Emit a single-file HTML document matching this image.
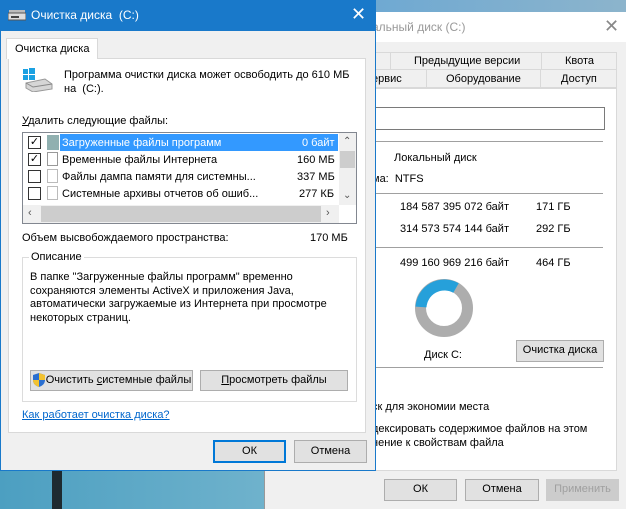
<!DOCTYPE html><html><head><meta charset="utf-8"><style>
*{box-sizing:border-box;margin:0;padding:0}
body{width:626px;height:509px;overflow:hidden;position:relative;font-family:"Liberation Sans",sans-serif;font-size:11px;color:#000;background:linear-gradient(180deg,#2f6fa6,#5aa0c8 40%,#4c9ec0);}
.a{position:absolute;white-space:nowrap}
.btn{position:absolute;background:#e1e1e1;border:1px solid #adadad;text-align:center;line-height:19px;font-size:11px;white-space:nowrap}
.line{position:absolute;height:1px;background:#a0a0a0}
</style></head><body>
<div class="a" style="left:0;top:0;width:626px;height:14px;background:linear-gradient(90deg,#3a83c0,#6fa9d2 60%,#8cb4cc)"></div>
<div class="a" style="left:0;top:470px;width:264px;height:39px;background:linear-gradient(90deg,#4c9fc1,#6fb2cc);"></div>
<div class="a" style="left:52px;top:470px;width:10px;height:39px;background:#1e2a30"></div>
<!-- back window -->
<div class="a" style="left:264px;top:12px;width:362px;height:497px;background:#f0f0f0;border-left:1px solid #999"></div>
<div class="a" style="left:264px;top:12px;width:362px;height:30px;background:#fff"></div>
<div class="a" style="left:372px;top:20px;color:#999;font-size:12px">альный диск (C:)</div>
<div class="a" style="left:604px;top:16px;color:#888;font-size:18px">✕</div>
<div class="a" style="left:370px;top:52px;width:247px;height:18px;border:1px solid #d9d9d9;background:#f0f0f0"></div>
<div class="a" style="left:390px;top:52px;width:1px;height:18px;background:#d9d9d9"></div>
<div class="a" style="left:541px;top:52px;width:1px;height:18px;background:#d9d9d9"></div>
<div class="a" style="left:414px;top:55px">Предыдущие версии</div>
<div class="a" style="left:565px;top:55px">Квота</div>
<div class="a" style="left:370px;top:70px;width:247px;height:18px;border:1px solid #d9d9d9;border-top:none"></div>
<div class="a" style="left:426px;top:70px;width:1px;height:18px;background:#d9d9d9"></div>
<div class="a" style="left:540px;top:70px;width:1px;height:18px;background:#d9d9d9"></div>
<div class="a" style="left:372px;top:73px">ервис</div>
<div class="a" style="left:446px;top:73px">Оборудование</div>
<div class="a" style="left:561px;top:73px">Доступ</div>
<div class="a" style="left:370px;top:88px;width:247px;height:383px;background:#fff;border:1px solid #d9d9d9;border-left:none"></div>
<div class="a" style="left:370px;top:107px;width:235px;height:23px;border:1px solid #7a7a7a;border-left:none"></div>
<div class="line" style="left:370px;top:141px;width:233px"></div>
<div class="a" style="left:394px;top:152px">Локальный диск</div>
<div class="a" style="left:372px;top:173px">ма:&nbsp; NTFS</div>
<div class="line" style="left:370px;top:193px;width:233px"></div>
<div class="a" style="left:400px;top:201px">184 587 395 072 байт</div><div class="a" style="left:536px;top:201px">171 ГБ</div>
<div class="a" style="left:400px;top:223px">314 573 574 144 байт</div><div class="a" style="left:536px;top:223px">292 ГБ</div>
<div class="line" style="left:370px;top:247px;width:233px"></div>
<div class="a" style="left:400px;top:257px">499 160 969 216 байт</div><div class="a" style="left:536px;top:257px">464 ГБ</div>
<svg class="a" style="left:414px;top:278px" width="60" height="60"><circle cx="30" cy="30" r="23.5" fill="none" stroke="#adadad" stroke-width="11"/><path d="M7 29 A23.5 23.5 0 0 1 42 10" fill="none" stroke="#26a0da" stroke-width="11"/></svg>
<div class="a" style="left:424px;top:349px">Диск C:</div>
<div class="btn" style="left:516px;top:340px;width:88px;height:22px">Очистка диска</div>
<div class="line" style="left:370px;top:367px;width:233px"></div>
<div class="a" style="left:372px;top:401px">ск для экономии места</div>
<div class="a" style="left:372px;top:423px">дексировать содержимое файлов на этом</div>
<div class="a" style="left:372px;top:437px">нение к свойствам файла</div>
<div class="btn" style="left:384px;top:479px;width:73px;height:22px">ОК</div>
<div class="btn" style="left:465px;top:479px;width:74px;height:22px">Отмена</div>
<div class="btn" style="left:546px;top:479px;width:73px;height:22px;color:#a0a0a0;border-color:#ccc;background:#ccc">Применить</div>
<!-- front dialog -->
<div class="a" style="left:0;top:0;width:376px;height:471px;background:#f0f0f0;border:1px solid #1979ca"></div>
<div class="a" style="left:0;top:0;width:376px;height:31px;background:#1979ca"></div>
<svg class="a" style="left:8px;top:9px" width="18" height="12"><rect x="1" y="1" width="16" height="3" fill="#bbb"/><rect x="0" y="4" width="18" height="7" fill="#ddd" stroke="#555" stroke-width="1"/><rect x="3" y="7" width="8" height="2" fill="#444"/></svg>
<div class="a" style="left:31px;top:8px;color:#fff;font-size:12px">Очистка диска&nbsp; (C:)</div>
<div class="a" style="left:351px;top:4px;color:#fff;font-size:18px">✕</div>
<div class="a" style="left:8px;top:58px;width:358px;height:375px;background:#fff;border:1px solid #d9d9d9"></div>
<div class="a" style="left:6px;top:38px;width:92px;height:21px;background:#fff;border:1px solid #d9d9d9;border-bottom:none;padding:4px 0 0 8px">Очистка диска</div>
<svg class="a" style="left:23px;top:68px" width="30" height="24"><rect x="0" y="1" width="5" height="5" fill="#1ba1e2"/><rect x="6" y="0" width="6" height="6" fill="#1ba1e2"/><rect x="0" y="7" width="5" height="5" fill="#1ba1e2"/><rect x="6" y="7" width="6" height="5" fill="#1ba1e2"/><path d="M3 15 L22 11 L29 16 L29 21 L10 24 L3 20Z" fill="#d6d6d6" stroke="#999"/><path d="M3 15 L10 19 L29 16" fill="none" stroke="#888"/></svg>
<div class="a" style="left:64px;top:69px">Программа очистки диска может освободить до 610 МБ</div>
<div class="a" style="left:64px;top:83px">на&nbsp; (C:).</div>
<div class="a" style="left:22px;top:115px"><u>У</u>далить следующие файлы:</div>
<div class="a" style="left:22px;top:132px;width:335px;height:92px;border:1px solid #828790;background:#fff"></div>
<div class="a" style="left:60px;top:134px;width:278px;height:17px;background:#3399ff"></div>
<div class="a" style="left:47px;top:135px;width:12px;height:15px;background:#90b0b0"></div>
<div class="a" style="left:28px;top:136px;width:13px;height:13px;border:1px solid #333;font-size:11px;line-height:11px;text-align:center">✓</div>
<div class="a" style="left:28px;top:153px;width:13px;height:13px;border:1px solid #333;font-size:11px;line-height:11px;text-align:center">✓</div>
<div class="a" style="left:28px;top:170px;width:13px;height:13px;border:1px solid #333"></div>
<div class="a" style="left:28px;top:187px;width:13px;height:13px;border:1px solid #333"></div>
<div class="a" style="left:47px;top:152px;width:11px;height:14px;border:1px solid #999;background:#fff"></div>
<div class="a" style="left:47px;top:169px;width:11px;height:14px;border:1px solid #bbb;background:#fff"></div>
<div class="a" style="left:47px;top:186px;width:11px;height:14px;border:1px solid #bbb;background:#fff"></div>
<div class="a" style="left:62px;top:137px;color:#fff">Загруженные файлы программ</div><div class="a" style="left:302px;top:137px;color:#fff">0 байт</div>
<div class="a" style="left:62px;top:154px">Временные файлы Интернета</div><div class="a" style="left:297px;top:154px">160 МБ</div>
<div class="a" style="left:62px;top:171px">Файлы дампа памяти для системны...</div><div class="a" style="left:297px;top:171px">337 МБ</div>
<div class="a" style="left:62px;top:188px">Системные архивы отчетов об ошиб...</div><div class="a" style="left:299px;top:188px">277 КБ</div>
<div class="a" style="left:339px;top:133px;width:17px;height:72px;background:#f0f0f0"></div>
<div class="a" style="left:340px;top:151px;width:15px;height:17px;background:#cdcdcd"></div>
<div class="a" style="left:343px;top:136px;font-size:10px;color:#555">⌃</div>
<div class="a" style="left:343px;top:190px;font-size:10px;color:#555">⌄</div>
<div class="a" style="left:23px;top:205px;width:316px;height:18px;background:#f0f0f0"></div>
<div class="a" style="left:41px;top:206px;width:280px;height:16px;background:#cdcdcd"></div>
<div class="a" style="left:28px;top:207px;color:#555">‹</div><div class="a" style="left:326px;top:207px;color:#555">›</div>
<div class="a" style="left:22px;top:232px">Объем высвобождаемого пространства:</div>
<div class="a" style="left:310px;top:232px">170 МБ</div>
<div class="a" style="left:22px;top:257px;width:335px;height:145px;border:1px solid #dcdcdc"></div>
<div class="a" style="left:29px;top:251px;background:#fff;padding:0 2px">Описание</div>
<div class="a" style="left:30px;top:271px;line-height:13.7px">В папке "Загруженные файлы программ" временно<br>сохраняются элементы ActiveX и приложения Java,<br>автоматически загружаемые из Интернета при просмотре<br>некоторых страниц.</div>
<div class="btn" style="left:30px;top:370px;width:163px;height:21px;padding-left:14px">Очистить <u>с</u>истемные файлы</div>
<svg class="a" style="left:32px;top:372px" width="14" height="16"><path d="M7 1 L13 3 L13 8 Q13 13 7 15 Q1 13 1 8 L1 3Z" fill="#2a6fd0"/><path d="M7 1 L13 3 L13 8 L7 8Z M7 8 L1 8 Q1 13 7 15Z" fill="#f2c230"/></svg>
<div class="btn" style="left:200px;top:370px;width:148px;height:21px"><u>П</u>росмотреть файлы</div>
<div class="a" style="left:22px;top:409px;color:#0066cc;text-decoration:underline">Как работает очистка диска?</div>
<div class="btn" style="left:213px;top:440px;width:73px;height:23px;border:2px solid #0078d7;line-height:19px">ОК</div>
<div class="btn" style="left:294px;top:440px;width:73px;height:23px;line-height:21px">Отмена</div>
</body></html>
